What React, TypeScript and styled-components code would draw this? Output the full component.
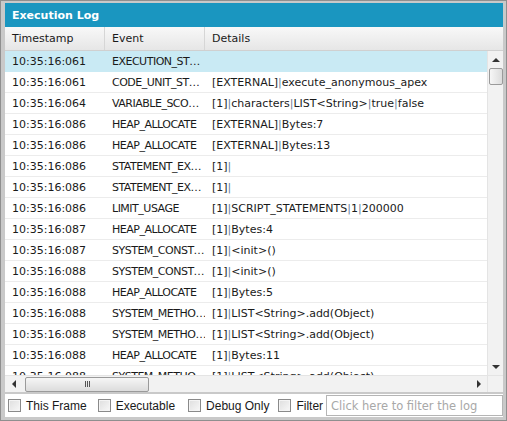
import React from 'react';
import styled, { createGlobalStyle } from 'styled-components';

const GlobalStyle = createGlobalStyle`
  html, body {
    margin: 0;
    padding: 0;
    background: #c4c4c4;
  }
  * {
    box-sizing: border-box;
  }
`;

const FONT = `"DejaVu Sans", Verdana, sans-serif`;
const UI_FONT = `"Liberation Sans", Arial, sans-serif`;

const Frame = styled.div`
  width: 507px;
  height: 421px;
  background: #c9c9c9;
  border: 1px solid #8f8f8f;
  padding: 2px 3px 3px 4px;
  font-family: ${FONT};
  font-size: 11px;
  color: #1a1a1a;
`;

const Panel = styled.div`
  display: flex;
  flex-direction: column;
  height: 100%;
  background: #fff;
`;

const TitleBar = styled.div`
  height: 24px;
  flex: none;
  display: flex;
  align-items: center;
  padding-left: 7px;
  background: #1a96c0;
  color: #fff;
  font-weight: bold;
  font-size: 11px;
`;

const Grid = styled.div`
  flex: 1;
  display: grid;
  grid-template-columns: 1fr 16px;
  grid-template-rows: 24px 1fr 17px;
  min-height: 0;
`;

const HeaderRow = styled.div`
  grid-column: 1 / 3;
  display: grid;
  grid-template-columns: 100px 100px 1fr;
  background: linear-gradient(#f8f8f8, #e6e6e6);
  border-bottom: 1px solid #d0d0d0;
`;

const HeaderCell = styled.div`
  display: flex;
  align-items: center;
  padding-left: 7px;
  border-right: 1px solid #d6d6d6;
  &:last-child {
    border-right: none;
  }
`;

const Body = styled.div`
  overflow: hidden;
`;

const Row = styled.div<{ $selected?: boolean }>`
  display: grid;
  grid-template-columns: 100px 100px 1fr;
  height: 21px;
  align-items: center;
  background: ${({ $selected }) => ($selected ? '#c9eaf4' : '#fff')};
  border-bottom: 1px solid ${({ $selected }) => ($selected ? '#c9eaf4' : '#ececec')};
`;

const Cell = styled.div<{ $tight?: boolean }>`
  padding-left: 7px;
  white-space: nowrap;
  overflow: hidden;
  letter-spacing: ${({ $tight }) => ($tight ? '-0.5px' : 'normal')};
`;

const Pipe = styled.span`
  color: #6a7f9a;
`;

const VScroll = styled.div`
  display: flex;
  flex-direction: column;
  align-items: center;
  background: #f2f2f2;
  border-left: 1px solid #e4e4e4;
`;

const Arrow = styled.div<{ $dir: 'up' | 'down' | 'left' | 'right' }>`
  width: 0;
  height: 0;
  flex: none;
  ${({ $dir }) =>
    $dir === 'up'
      ? 'border-left: 4px solid transparent; border-right: 4px solid transparent; border-bottom: 4px solid #333;'
      : $dir === 'down'
      ? 'border-left: 4px solid transparent; border-right: 4px solid transparent; border-top: 4px solid #333;'
      : $dir === 'left'
      ? 'border-top: 4px solid transparent; border-bottom: 4px solid transparent; border-right: 4px solid #333;'
      : 'border-top: 4px solid transparent; border-bottom: 4px solid transparent; border-left: 4px solid #333;'}
`;

const ArrowBox = styled.div<{ $h?: boolean }>`
  width: ${({ $h }) => ($h ? '17px' : '16px')};
  height: 17px;
  display: flex;
  align-items: center;
  justify-content: center;
  flex: none;
`;

const VThumb = styled.div`
  width: 14px;
  height: 17px;
  border: 1px solid #9a9a9a;
  border-radius: 2px;
  background: linear-gradient(90deg, #f6f6f6, #dcdcdc);
`;

const Track = styled.div`
  flex: 1;
`;

const HScroll = styled.div`
  display: flex;
  align-items: center;
  background: #f2f2f2;
  border-top: 1px solid #e4e4e4;
`;

const HThumb = styled.div`
  width: 124px;
  height: 15px;
  margin-left: 3px;
  border: 1px solid #9a9a9a;
  border-radius: 2px;
  background: linear-gradient(#f6f6f6, #dcdcdc);
  display: flex;
  align-items: center;
  justify-content: center;
  gap: 1px;
`;

const Grip = styled.span`
  width: 1px;
  height: 6px;
  background: #555;
`;

const Corner = styled.div`
  background: #f2f2f2;
  border-top: 1px solid #e4e4e4;
  border-left: 1px solid #e4e4e4;
`;

const FilterBar = styled.div`
  flex: none;
  height: 25px;
  display: flex;
  align-items: center;
  padding: 0 0 0 3px;
  background: #fff;
  border-top: 2px solid #c9c9c9;
  font-family: ${UI_FONT};
`;

const CheckLabel = styled.label<{ $gap: number }>`
  display: flex;
  align-items: center;
  gap: 5px;
  margin-right: ${({ $gap }) => $gap}px;
  font-size: 12px;
  white-space: nowrap;
  color: #1a1a1a;
`;

const Box = styled.span`
  width: 13px;
  height: 13px;
  flex: none;
  border: 1px solid #8a8a8a;
  background: linear-gradient(135deg, #dedede, #f8f8f8);
  box-shadow: inset 0 0 0 1px #f4f4f4;
`;

const FilterInput = styled.div`
  margin-left: auto;
  width: 177px;
  height: 21px;
  border: 1px solid #b5b5b5;
  display: flex;
  align-items: center;
  padding-left: 4px;
  color: #a8a8a8;
  font-family: ${FONT};
  font-size: 11.5px;
  white-space: nowrap;
  overflow: hidden;
`;

const rows: [string, string, string][] = [
  ['10:35:16:061', 'EXECUTION_ST…', ''],
  ['10:35:16:061', 'CODE_UNIT_ST…', '[EXTERNAL]|execute_anonymous_apex'],
  ['10:35:16:064', 'VARIABLE_SCO…', '[1]|characters|LIST<String>|true|false'],
  ['10:35:16:086', 'HEAP_ALLOCATE', '[EXTERNAL]|Bytes:7'],
  ['10:35:16:086', 'HEAP_ALLOCATE', '[EXTERNAL]|Bytes:13'],
  ['10:35:16:086', 'STATEMENT_EX…', '[1]|'],
  ['10:35:16:086', 'STATEMENT_EX…', '[1]|'],
  ['10:35:16:086', 'LIMIT_USAGE', '[1]|SCRIPT_STATEMENTS|1|200000'],
  ['10:35:16:087', 'HEAP_ALLOCATE', '[1]|Bytes:4'],
  ['10:35:16:087', 'SYSTEM_CONST…', '[1]|<init>()'],
  ['10:35:16:088', 'SYSTEM_CONST…', '[1]|<init>()'],
  ['10:35:16:088', 'HEAP_ALLOCATE', '[1]|Bytes:5'],
  ['10:35:16:088', 'SYSTEM_METHO…', '[1]|LIST<String>.add(Object)'],
  ['10:35:16:088', 'SYSTEM_METHO…', '[1]|LIST<String>.add(Object)'],
  ['10:35:16:088', 'HEAP_ALLOCATE', '[1]|Bytes:11'],
  ['10:35:16:088', 'SYSTEM_METHO…', '[1]|LIST<String>.add(Object)'],
];

const filters: [string, number][] = [
  ['This Frame', 11],
  ['Executable', 13],
  ['Debug Only', 9],
  ['Filter', 0],
];

const renderDetails = (text: string) =>
  text.split('|').map((part, i) => (
    <React.Fragment key={i}>
      {i > 0 && <Pipe>|</Pipe>}
      {part}
    </React.Fragment>
  ));

export default function App() {
  return (
    <>
      <GlobalStyle />
      <Frame>
        <Panel>
          <TitleBar>Execution Log</TitleBar>
          <Grid>
            <HeaderRow>
              <HeaderCell>Timestamp</HeaderCell>
              <HeaderCell>Event</HeaderCell>
              <HeaderCell>Details</HeaderCell>
            </HeaderRow>
            <Body>
              {rows.map(([time, event, details], i) => (
                <Row key={i} $selected={i === 0}>
                  <Cell>{time}</Cell>
                  <Cell $tight>{event}</Cell>
                  <Cell>{renderDetails(details)}</Cell>
                </Row>
              ))}
            </Body>
            <VScroll>
              <ArrowBox>
                <Arrow $dir="up" />
              </ArrowBox>
              <VThumb />
              <Track />
              <ArrowBox>
                <Arrow $dir="down" />
              </ArrowBox>
            </VScroll>
            <HScroll>
              <ArrowBox $h>
                <Arrow $dir="left" />
              </ArrowBox>
              <HThumb>
                <Grip />
                <Grip />
                <Grip />
              </HThumb>
              <Track />
              <ArrowBox $h>
                <Arrow $dir="right" />
              </ArrowBox>
            </HScroll>
            <Corner />
          </Grid>
          <FilterBar>
            {filters.map(([label, gap]) => (
              <CheckLabel key={label} $gap={gap}>
                <Box />
                {label}
              </CheckLabel>
            ))}
            <FilterInput>Click here to filter the log</FilterInput>
          </FilterBar>
        </Panel>
      </Frame>
    </>
  );
}
